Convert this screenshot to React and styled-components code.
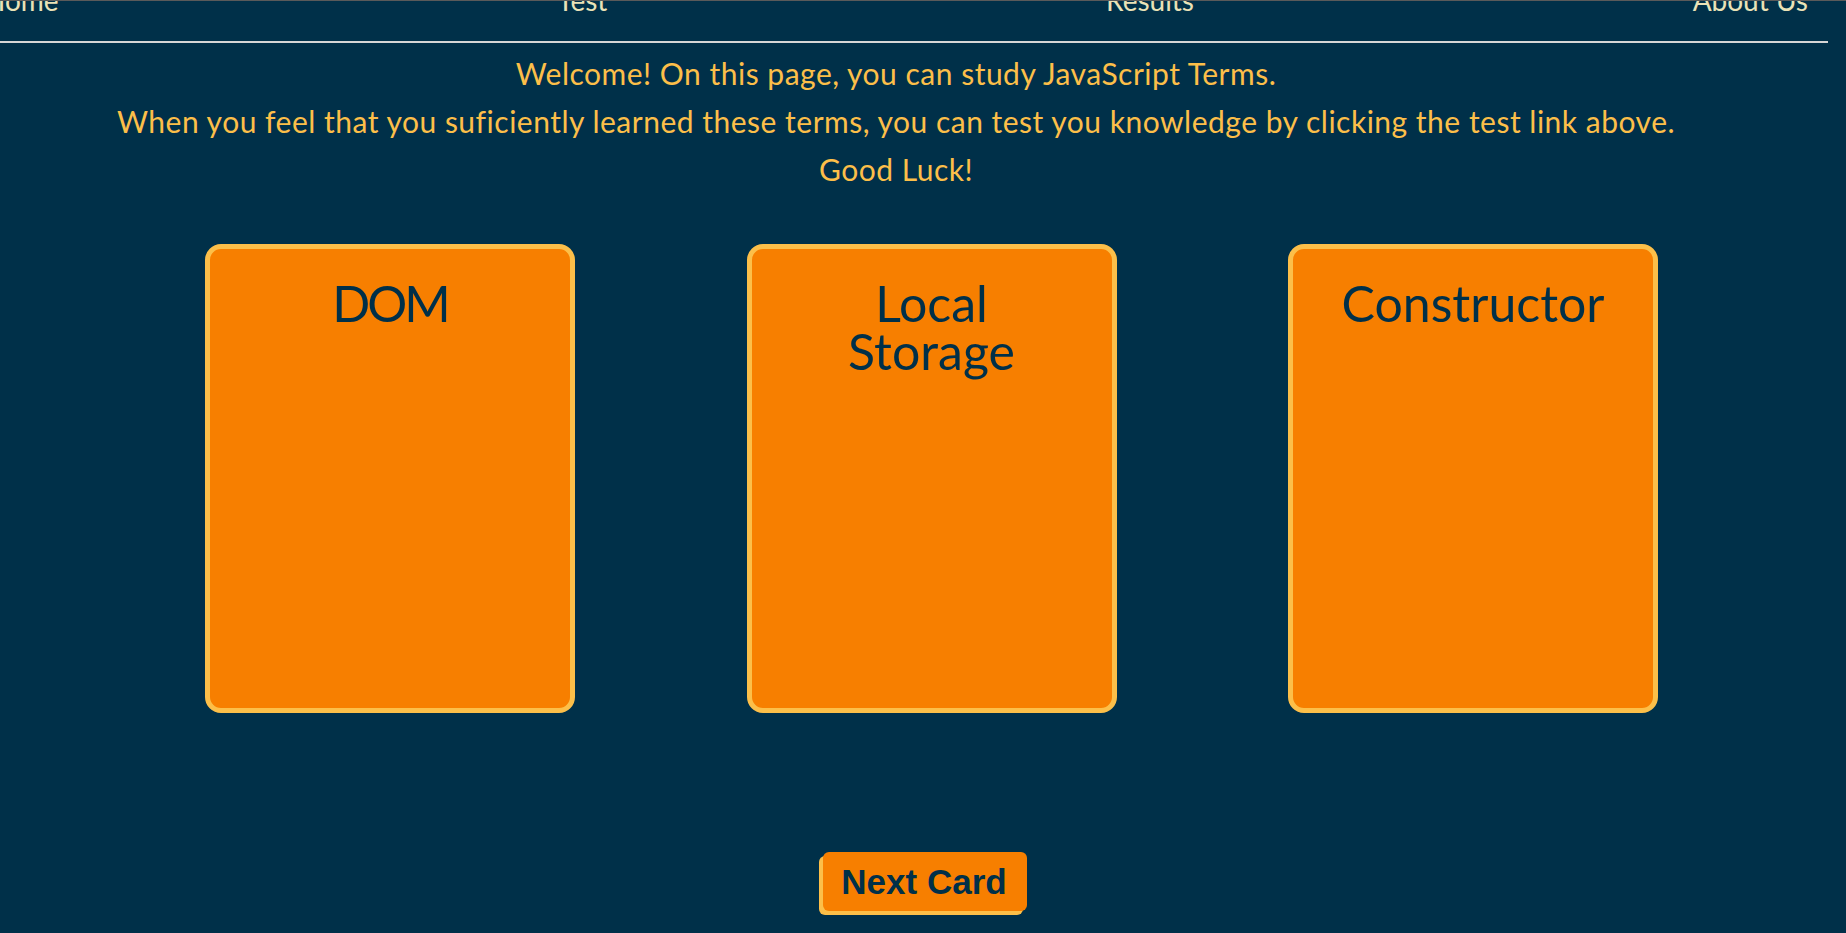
import React from "react";
import styled, { createGlobalStyle } from "styled-components";

const GlobalStyle = createGlobalStyle`
  html, body {
    margin: 0;
    padding: 0;
    background: #003049;
    overflow: hidden;
  }
  body {
    border-top: 1px solid #5a5a5a;
    font-family: Lato, "Open Sans", sans-serif;
  }
`;

const Page = styled.div`
  display: flex;
  flex-direction: column;
  width: 1846px;
  height: 932px;
`;

const Nav = styled.nav`
  margin-top: -21px;
  width: 1828px;
  border-bottom: 2px solid #d6d6d6;
`;

const NavList = styled.ul`
  list-style: none;
  margin: 0 20px 0 -16px;
  padding: 0;
  display: flex;
  justify-content: space-between;
  height: 61px;
`;

const NavItem = styled.li`
  font-size: 28px;
  line-height: 40px;
  color: #eae2b7;
`;

const Intro = styled.section`
  width: 1792px;
  margin-top: 6px;
  text-align: center;
  color: #fcbf49;
  font-size: 30px;
  letter-spacing: 0.5px;
  line-height: 48px;
`;

const IntroLine = styled.p`
  margin: 0;
`;

const CardRow = styled.div`
  display: flex;
  gap: 171.5px;
  padding-left: 205px;
  margin-top: 51px;
`;

const Card = styled.div`
  box-sizing: border-box;
  width: 370px;
  height: 469px;
  background: #f77f00;
  border: 5px solid #fcbf49;
  border-radius: 16px;
  display: flex;
  flex-direction: column;
  align-items: center;
  padding-top: 30px;
`;

const CardTitle = styled.h2`
  margin: 0;
  max-width: 280px;
  text-align: center;
  color: #003049;
  font-size: 50px;
  font-weight: 400;
  line-height: 48px;
  letter-spacing: ${(p) => (p.$tight ? "-3px" : "0")};
`;

const ButtonRow = styled.div`
  width: 1850px;
  display: flex;
  justify-content: center;
  margin-top: 139px;
`;

const NextButton = styled.button`
  font-family: "Liberation Sans", Arial, sans-serif;
  font-weight: 700;
  font-size: 35px;
  line-height: 39px;
  color: #003049;
  background: #f77f00;
  border: none;
  border-radius: 6px;
  padding: 10px 20px 10px 18px;
  box-shadow: -4px 4px 0 #fcbf49;
  cursor: pointer;
`;

const navItems = ["Home", "Test", "Results", "About Us"];
const terms = [
  { name: "DOM", tight: true },
  { name: "Local Storage", tight: false },
  { name: "Constructor", tight: false },
];

export default function App() {
  return (
    <>
      <GlobalStyle />
      <Page>
        <Nav>
          <NavList>
            {navItems.map((n) => (
              <NavItem key={n}>{n}</NavItem>
            ))}
          </NavList>
        </Nav>
        <Intro>
          <IntroLine>Welcome! On this page, you can study JavaScript Terms.</IntroLine>
          <IntroLine>
            When you feel that you suficiently learned these terms, you can test you knowledge by clicking the test link above.
          </IntroLine>
          <IntroLine>Good Luck!</IntroLine>
        </Intro>
        <CardRow>
          {terms.map((t) => (
            <Card key={t.name}>
              <CardTitle $tight={t.tight}>{t.name}</CardTitle>
            </Card>
          ))}
        </CardRow>
        <ButtonRow>
          <NextButton>Next Card</NextButton>
        </ButtonRow>
      </Page>
    </>
  );
}
